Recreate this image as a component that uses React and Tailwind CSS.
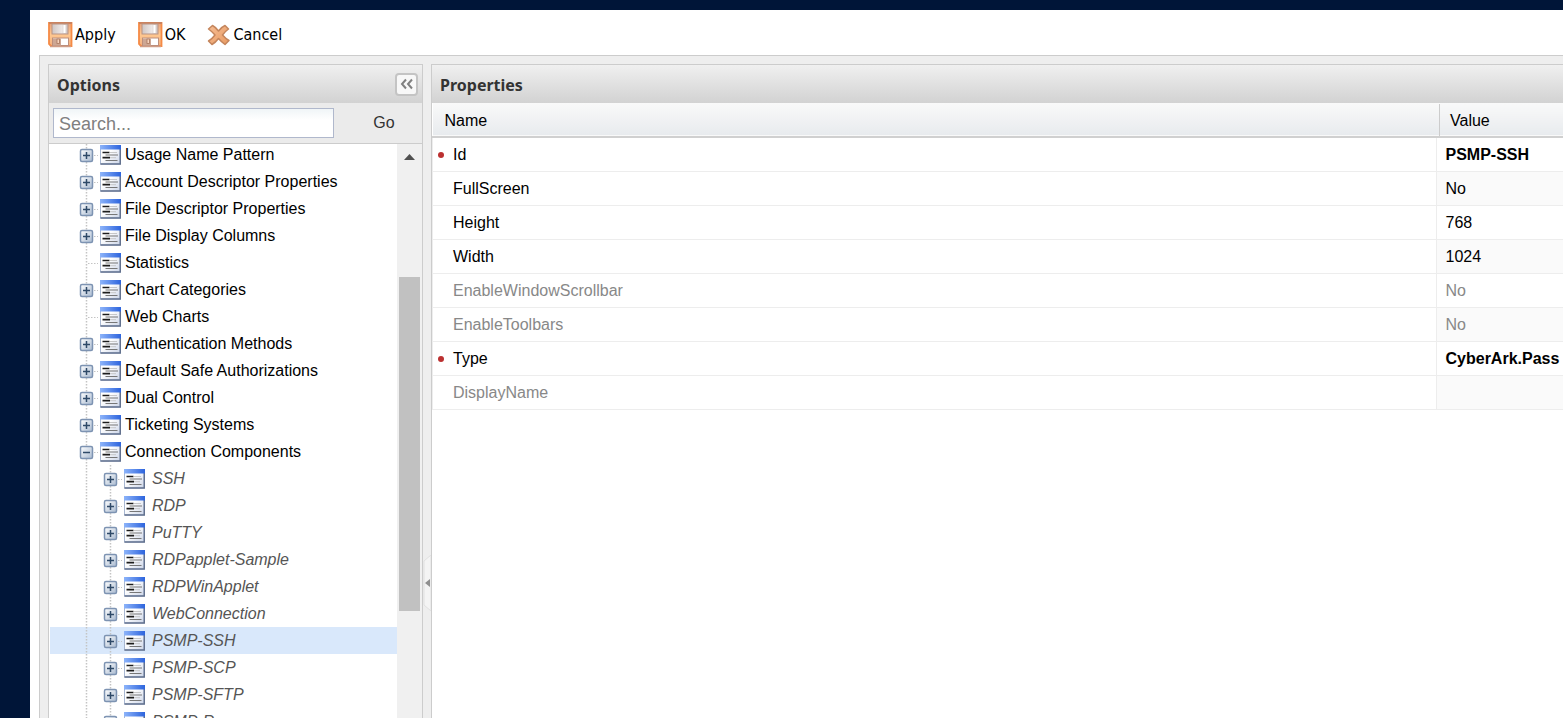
const nodes = [
  { label: 'Usage Name Pattern', state: 'closed' },
  { label: 'Account Descriptor Properties', state: 'closed' },
  { label: 'File Descriptor Properties', state: 'closed' },
  { label: 'File Display Columns', state: 'closed' },
  { label: 'Statistics', state: 'leaf' },
  { label: 'Chart Categories', state: 'closed' },
  { label: 'Web Charts', state: 'leaf' },
  { label: 'Authentication Methods', state: 'closed' },
  { label: 'Default Safe Authorizations', state: 'closed' },
  { label: 'Dual Control', state: 'closed' },
  { label: 'Ticketing Systems', state: 'closed' },
  { label: 'Connection Components', state: 'open' },
]

const components = [
  'SSH',
  'RDP',
  'PuTTY',
  'RDPapplet-Sample',
  'RDPWinApplet',
  'WebConnection',
  'PSMP-SSH',
  'PSMP-SCP',
  'PSMP-SFTP',
  'PSMP-R',
]

const properties = [
  { name: 'Id', value: 'PSMP-SSH', required: true },
  { name: 'FullScreen', value: 'No' },
  { name: 'Height', value: '768' },
  { name: 'Width', value: '1024' },
  { name: 'EnableWindowScrollbar', value: 'No', muted: true },
  { name: 'EnableToolbars', value: 'No', muted: true },
  { name: 'Type', value: 'CyberArk.Pass', required: true },
  { name: 'DisplayName', value: '', muted: true },
]

function SaveIcon() {
  return (
    <svg width="25" height="26" viewBox="0 0 25 26" className="shrink-0" aria-hidden="true">
      <defs>
        <linearGradient id="disk" x1="0" y1="0" x2="0" y2="1">
          <stop offset="0" stopColor="#e8a27c" />
          <stop offset=".5" stopColor="#ffc890" />
          <stop offset="1" stopColor="#f3b080" />
        </linearGradient>
        <linearGradient id="shutter" x1="0" y1="0" x2="1" y2="0">
          <stop offset="0" stopColor="#cfc6c4" />
          <stop offset=".6" stopColor="#ece7e6" />
          <stop offset="1" stopColor="#cdc4c2" />
        </linearGradient>
      </defs>
      <path d="M1 1h22.500v23H3l-2-2z" fill="url(#disk)" stroke="#f58a45" strokeWidth="1.800" />
      <path d="M1 1h23" stroke="#bd8069" strokeWidth="1.500" />
      <path d="M2 24.500h21" stroke="#cf9c86" strokeWidth="1.500" />
      <rect x="4" y="2" width="16" height="10" fill="url(#shutter)" stroke="#b99384" />
      <path d="M16.500 3v8" stroke="#fff" strokeWidth="2" />
      <rect x="4.500" y="16" width="16" height="7.500" fill="#fff" stroke="#bd8f7c" />
      <rect x="5" y="16.500" width="8" height="7" fill="#cda794" />
      <rect x="9" y="17" width="2.500" height="4.500" fill="#f5d3bd" stroke="#a9765d" strokeWidth=".8" />
    </svg>
  )
}

function CancelIcon() {
  return (
    <svg width="24" height="24" viewBox="0 0 24 24" className="shrink-0" aria-hidden="true">
      <defs>
        <linearGradient id="cross" x1="0" y1="0" x2="1" y2="1">
          <stop offset="0" stopColor="#f6bd94" />
          <stop offset="1" stopColor="#e89a61" />
        </linearGradient>
      </defs>
      <path
        d="M5.500 2.500Q8.500 4 11.500 8q3-4 6.500-5.500l3.500 3.500q-3.500 2.500-6 6 3 3.500 6.500 5.500l-4 4q-3.500-2.500-6.500-6-3 4-6.500 6L1.500 18q4-2.500 6.500-6Q5 8.500 1.500 6z"
        fill="url(#cross)"
        stroke="#c4855c"
        strokeWidth="1.500"
        strokeLinejoin="round"
      />
    </svg>
  )
}

function NodeIcon() {
  return (
    <svg width="21" height="20" viewBox="0 0 21 20" className="shrink-0" aria-hidden="true">
      <defs>
        <linearGradient id="titlebar" x1="0" y1="0" x2="1" y2="0">
          <stop offset="0" stopColor="#8db4fa" />
          <stop offset="1" stopColor="#2d64dd" />
        </linearGradient>
        <linearGradient id="sheet" x1="0" y1="0" x2="1" y2="1">
          <stop offset=".4" stopColor="#fff" />
          <stop offset="1" stopColor="#ccd5e8" />
        </linearGradient>
      </defs>
      <rect x=".5" y=".5" width="19.500" height="18.500" fill="url(#sheet)" stroke="#a9b8d2" />
      <path d="M.5 19h19.800V4" fill="none" stroke="#62718e" strokeWidth="1.400" />
      <rect x="0" y="0" width="21" height="4.500" fill="url(#titlebar)" />
      <path d="M2.500 7.500h7M2.500 12.700h7.500" stroke="#1c1c1c" strokeWidth="1.700" />
      <path d="M9.500 7.500h7.500M10 12.700h6" stroke="#bbb" strokeWidth=".8" />
      <path d="M5.500 10h12.500M5.500 15.500h12" stroke="#777" strokeWidth="1.200" />
    </svg>
  )
}

function Toggle({ state }) {
  return (
    <svg width="24" height="27" viewBox="0 0 24 27" className="shrink-0" aria-hidden="true">
      <defs>
        <linearGradient id="knob" x1="0" y1="0" x2="1" y2="1">
          <stop offset="0" stopColor="#fff" />
          <stop offset="1" stopColor="#a9bad0" />
        </linearGradient>
      </defs>
      <path d="M10.500 0v27" stroke="#c4c4c4" strokeWidth="1.500" strokeDasharray="1.500 1.500" />
      <path d="M12 14.500h10" stroke="#c4c4c4" strokeDasharray="1.500 1.500" />
      {state !== 'leaf' && (
        <>
          <rect x="4.500" y="8.500" width="12" height="12" rx="1.500" fill="url(#knob)" stroke="#7d93b2" strokeWidth="1.500" />
          <path d="M7 14.500h7" stroke="#2f4a68" strokeWidth="1.500" />
          {state === 'closed' && <path d="M10.500 11v7" stroke="#2f4a68" strokeWidth="1.500" />}
        </>
      )}
    </svg>
  )
}

function Guide() {
  return (
    <svg width="24" height="27" viewBox="0 0 24 27" className="shrink-0" aria-hidden="true">
      <path d="M10.500 0v27" stroke="#c4c4c4" strokeWidth="1.500" strokeDasharray="1.500 1.500" />
    </svg>
  )
}

function ToolButton({ icon, children }) {
  return (
    <button type="button" className="flex items-center gap-0.5 text-black">
      {icon}
      {children}
    </button>
  )
}

function PanelHeader({ title, children }) {
  return (
    <div className="flex h-[38px] shrink-0 items-center justify-between bg-linear-to-b from-[#f0f0f0] to-[#d2d2d2] pr-1 pl-2">
      <h2 className="pt-0.5 font-['Noto_Sans',sans-serif] text-base font-bold text-[#333]">{title}</h2>
      {children}
    </div>
  )
}

function Scrollbar() {
  return (
    <div className="flex w-[25px] shrink-0 flex-col bg-[#f0f0f0] pl-0.5">
      <svg width="21" height="6" viewBox="0 0 21 6" className="mt-2.5 shrink-0" aria-hidden="true">
        <path d="M5 6l5.500-6 5.500 6z" fill="#505050" />
      </svg>
      <div className="mt-[117px] h-[334px] w-[21px] shrink-0 bg-[#c1c1c1]" />
    </div>
  )
}

function OptionsPanel() {
  return (
    <section className="flex w-[375px] shrink-0 flex-col border border-b-0 border-[#ccc] bg-white">
      <PanelHeader title="Options">
        <button
          type="button"
          aria-label="Collapse options"
          className="flex size-[23px] items-center justify-center rounded border-2 border-[#c4c4c4] bg-[#f8f8f8]"
        >
          <svg width="13" height="12" viewBox="0 0 13 12" fill="none" stroke="#808080" strokeWidth="2" aria-hidden="true">
            <path d="M6 1.500L2 6l4 4.500M12 1.500L8 6l4 4.500" />
          </svg>
        </button>
      </PanelHeader>
      <form className="flex h-[41px] shrink-0 items-center border-b border-[#ccc] bg-[#ebebeb] pl-1">
        <input
          type="text"
          aria-label="Search"
          placeholder="Search..."
          className="h-[30px] w-[281px] border border-[#b0b8cc] bg-linear-to-b from-[#f0f5f7] to-white to-40% px-[5px] pt-0.5 text-lg placeholder:text-[#808080]"
        />
        <button type="button" className="flex-1 pl-3 text-center text-[#333]">
          Go
        </button>
      </form>
      <div className="flex min-h-0 flex-1 pl-px">
        <div className="min-w-0 flex-1 overflow-hidden">
          <ul className="-mt-[3px]">
            {nodes.map((node) => (
              <li key={node.label} className="flex h-[27px] items-center pl-[26px]">
                <Toggle state={node.state} />
                <NodeIcon />
                <a href="#" className="pl-1 whitespace-nowrap text-black">
                  {node.label}
                </a>
              </li>
            ))}
            {components.map((name) => (
              <li
                key={name}
                className={`flex h-[27px] items-center pl-[26px] ${name === 'PSMP-SSH' ? 'bg-[#d9e8fb]' : ''}`}
              >
                <Guide />
                <Toggle state="closed" />
                <NodeIcon />
                <a href="#" className="pl-[7px] whitespace-nowrap text-[#555] italic">
                  {name}
                </a>
              </li>
            ))}
          </ul>
        </div>
        <Scrollbar />
      </div>
    </section>
  )
}

function Splitter() {
  return (
    <div className="flex w-2 shrink-0 flex-col pt-[491px]">
      <svg width="8" height="56" viewBox="0 0 8 56" aria-hidden="true">
        <path d="M8 0v56L1 50V6z" fill="#f4f4f4" stroke="#e0e0e0" />
        <path d="M7 24v8l-5-4z" fill="#909090" />
      </svg>
    </div>
  )
}

function PropertiesPanel() {
  return (
    <section className="flex min-w-0 flex-1 flex-col overflow-hidden border-t border-l border-[#ccc] bg-white">
      <PanelHeader title="Properties" />
      <table className="w-full table-fixed text-left whitespace-nowrap">
        <thead>
          <tr className="h-[34px] border-b-2 border-[#d0d0d0] bg-linear-to-b from-[#f9f9f9] to-[#e8ebee]">
            <th className="pt-[3px] pb-0 pl-3 font-normal">Name</th>
            <th className="w-[127px] p-0 font-normal">
              <div className="ml-[3px] flex h-8 items-center border-l border-[#ccc] pt-[3px] pl-2.5">Value</div>
            </th>
          </tr>
        </thead>
        <tbody>
          {properties.map((p, i) => (
            <tr key={p.name} className={`h-[34px] border-b border-[#ededed] ${p.muted ? 'text-[#888]' : 'text-black'}`}>
              <td className="border-l border-[#ededed] px-0 pt-0.5 pb-0">
                <div className="flex items-center">
                  <span className="flex w-5 justify-center">
                    {p.required && <span className="mr-1 size-1.5 rounded-full bg-[#bb3030]" />}
                  </span>
                  {p.name}
                </div>
              </td>
              <td
                className={`overflow-hidden border-l border-[#ededed] pt-0.5 pb-0 pl-[9px] ${p.required ? 'font-bold' : ''} ${i % 2 ? 'bg-[#fafafa]' : ''}`}
              >
                {p.value}
              </td>
            </tr>
          ))}
        </tbody>
      </table>
    </section>
  )
}

export default function App() {
  return (
    <div className="h-screen overflow-hidden bg-[#001538] pt-2.5 pl-[30px] font-['Liberation_Sans',sans-serif] text-base">
      <main className="flex h-full flex-col bg-white">
        <div className="flex h-[45px] shrink-0 items-center gap-[22px] pt-1 pl-[18px] font-['DejaVu_Sans_Condensed','DejaVu_Sans',sans-serif]">
          <ToolButton icon={<SaveIcon />}>Apply</ToolButton>
          <ToolButton icon={<SaveIcon />}>OK</ToolButton>
          <ToolButton icon={<CancelIcon />}>Cancel</ToolButton>
        </div>
        <div className="ml-[9px] flex min-h-0 flex-1 border-t border-l border-[#ccc] bg-[#eee] pt-2 pl-2">
          <OptionsPanel />
          <Splitter />
          <PropertiesPanel />
        </div>
      </main>
    </div>
  )
}
